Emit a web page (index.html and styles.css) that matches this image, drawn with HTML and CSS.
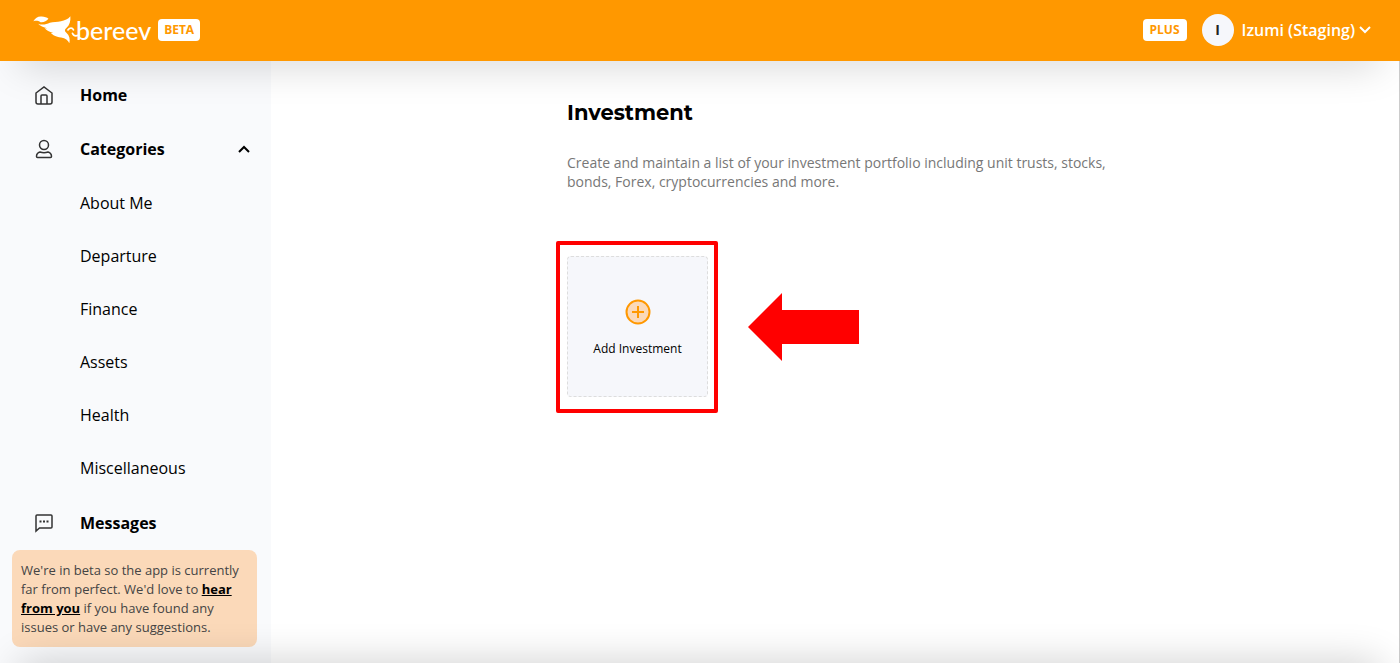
FILE: index.html
```
<!DOCTYPE html>
<html lang="en">
<head>
    <meta charset="UTF-8">
    <meta name="viewport" content="width=device-width, initial-scale=1.0">
    <title>Bereev - Investment</title>
    <link rel="stylesheet" href="styles.css">
</head>
<body>
    <header class="topbar">
        <a href="#" class="logo">
            <svg class="logo-bird" width="48" height="29" viewBox="99 54 140 84" fill="#fff">
                <path d="M100 72 C106 61 114 57 124 58 C133 59 140 60 144 65 C138 72 131 76 121 75 C114 70 107 70 100 72 Z"/>
                <path d="M114 79 C126 84 138 81 148 76 C168 72 195 74 208 57 C209 71 206 82 197 91 C190 97 191 101 197 106 C205 113 208 124 205 136 C201 127 194 121 181 119 C164 117 158 112 151 106 L158 106 C146 102 139 98 133 92 L141 92 C129 90 120 86 114 79 Z"/>
                <path d="M201 97 C207 90 214 91 217 97 M214 107 C217 114 224 116 231 113" fill="none" stroke="#fff" stroke-width="5" stroke-linecap="round"/>
            </svg>
            <span class="logo-text">bereev</span>
        </a>
        <span class="badge">BETA</span>
        <div class="account">
            <span class="badge badge-plan">PLUS</span>
            <button type="button" class="account-button">
                <span class="avatar">I</span>
                <span>Izumi (Staging)</span>
                <svg class="account-chevron" width="12" height="8" viewBox="0 0 12 8" fill="none" stroke="#fff" stroke-width="2"><path d="M1 1l5 5 5-5"/></svg>
            </button>
        </div>
    </header>

    <div class="layout">
        <aside class="sidebar">
            <nav>
                <a href="#" class="nav-item">
                    <svg class="nav-icon" width="18" height="20" viewBox="0 0 18 20"><path d="M1 8L9 2l8 6v9q0 2-2 2H3q-2 0-2-2z"/><path d="M6 19v-8q0-1 1-1h4q1 0 1 1v8"/></svg>
                    Home
                </a>
                <button type="button" class="nav-item">
                    <svg class="nav-icon" width="18" height="20" viewBox="0 0 18 20"><circle cx="9" cy="6" r="4.500"/><path d="M5 13Q9 14.500 13 13q3.500 1 3.500 4.500 0 1-1 1h-13q-1 0-1-1Q1.500 14 5 13z"/></svg>
                    Categories
                    <svg class="nav-chevron" width="12" height="8" viewBox="0 0 12 8" fill="none" stroke="#000" stroke-width="2"><path d="M1 7l5-5 5 5"/></svg>
                </button>
                <div class="sub-nav">
                    <a href="#">About Me</a>
                    <a href="#">Departure</a>
                    <a href="#">Finance</a>
                    <a href="#">Assets</a>
                    <a href="#">Health</a>
                    <a href="#">Miscellaneous</a>
                </div>
                <a href="#" class="nav-item">
                    <svg class="nav-icon" width="18" height="20" viewBox="0 0 18 20"><path d="M1 18V3q0-1 1-1h14q1 0 1 1v11q0 1-1 1H4.500z"/><path d="M4.500 8.500h2M8 8.500h2M11.500 8.500h2" stroke-width="2"/></svg>
                    Messages
                </a>
            </nav>
            <p class="beta-note">We're in beta so the app is currently far from perfect. We'd love to <a href="#">hear from you</a> if you have found any issues or have any suggestions.</p>
        </aside>

        <main class="content">
            <div class="container">
                <h1>Investment</h1>
                <p class="description">Create and maintain a list of your investment portfolio including unit trusts, stocks, bonds, Forex, cryptocurrencies and more.</p>
                <div class="add-row">
                    <div class="highlight">
                        <button type="button" class="add-card">
                            <svg width="26" height="26" viewBox="0 0 26 26" fill="#fbd9b9" stroke="#ff9800" stroke-width="2"><circle cx="13" cy="13" r="11.500"/><path d="M13 7v12M7 13h12"/></svg>
                            Add Investment
                        </button>
                    </div>
                    <svg width="111" height="68" viewBox="0 0 111 68"><path d="M0 34L34 0v17h77v34H34v17z" fill="#f00"/></svg>
                </div>
            </div>
        </main>
    </div>
    <div class="bottom-shadow"></div>
</body>
</html>
```
FILE: styles.css
```
* {
    box-sizing: border-box;
}
body {
    margin: 0;
    min-height: 100vh;
    display: flex;
    flex-direction: column;
    font-family: 'Open Sans', 'Noto Sans', sans-serif;
    font-size: 16px;
    color: #000;
    background: #fff;
}
a {
    color: inherit;
    text-decoration: none;
}
button {
    font: inherit;
    color: inherit;
    border: none;
    background: none;
    padding: 0;
    cursor: pointer;
}

/* Top bar */
.topbar {
    position: relative;
    z-index: 1;
    height: 61px;
    padding: 0 29px 2px 33px;
    display: flex;
    align-items: center;
    background: #ff9800;
    box-shadow: 0 20px 40px -20px rgba(0, 0, 0, 0.25);
}
.logo {
    display: flex;
    align-items: center;
    margin-right: 7px;
    color: #fff;
}
.logo-bird {
    margin-right: -5px;
}
.logo-text {
    font-family: Lato, sans-serif;
    font-size: 25px;
    font-weight: 500;
    line-height: 28px;
}
.badge {
    padding: 0 6px;
    border-radius: 4px;
    background: #fff;
    color: #ff9800;
    font-size: 12px;
    font-weight: 700;
    line-height: 22px;
}
.badge-plan {
    padding: 0 7px;
}
.account {
    margin-left: auto;
    display: flex;
    align-items: center;
    gap: 15px;
}
.account-button {
    display: flex;
    align-items: center;
    gap: 8px;
    color: #fff;
    font-weight: 600;
}
.account-chevron {
    margin-left: -4px;
}
.avatar {
    width: 32px;
    border-radius: 50%;
    background: #f6f7fb;
    color: #222;
    font-size: 14px;
    font-weight: 700;
    line-height: 32px;
    text-align: center;
}

/* Sidebar */
.layout {
    flex: 1;
    display: flex;
    border-right: 1px solid #ccc;
}
.sidebar {
    width: 271px;
    padding: 7px 14px 16px 12px;
    display: flex;
    flex-direction: column;
    justify-content: space-between;
    background: #f9fafc;
}
.nav-item {
    width: 100%;
    height: 54px;
    padding: 0 7px 0 23px;
    display: flex;
    align-items: center;
    font-weight: 700;
}
.nav-icon {
    margin-right: 27px;
    fill: none;
    stroke: #333;
    stroke-width: 1.5;
}
.nav-chevron {
    margin-left: auto;
}
.sub-nav {
    padding: 1px 0 1px 68px;
}
.sub-nav a {
    display: block;
    line-height: 53px;
}
.beta-note {
    margin: 0;
    padding: 11px 14px 10px 9px;
    border-radius: 8px;
    background: #fbd9b9;
    color: #444;
    font-size: 13px;
    line-height: 19px;
}
.beta-note a {
    color: #000;
    font-weight: 700;
    text-decoration: underline;
}

/* Main content */
.content {
    flex: 1;
    padding: 38px 24px;
}
.container {
    max-width: 536px;
    margin: 0 auto;
}
h1 {
    margin: 0 0 26px;
    font-family: Montserrat, Inter, sans-serif;
    font-size: 21px;
    font-weight: 700;
    line-height: 28px;
}
.description {
    margin: 0 -16px 50px 0;
    color: #777;
    font-size: 14px;
    line-height: 19px;
}
.add-row {
    display: flex;
    align-items: center;
    gap: 30px;
    margin-left: -11px;
}
.highlight {
    padding: 11px 6px 12px 7px;
    border: 4px solid #f00;
    border-radius: 2px;
}
.add-card {
    width: 141px;
    height: 141px;
    padding-top: 2px;
    display: flex;
    flex-direction: column;
    align-items: center;
    justify-content: center;
    gap: 15px;
    border: 1px dashed #ddd;
    border-radius: 4px;
    background: #f6f7fb;
    font-size: 12px;
}

.bottom-shadow {
    position: fixed;
    right: 0;
    bottom: -80px;
    left: 0;
    height: 80px;
    box-shadow: 0 -20px 40px -20px rgba(0, 0, 0, 0.2);
    pointer-events: none;
}
```
